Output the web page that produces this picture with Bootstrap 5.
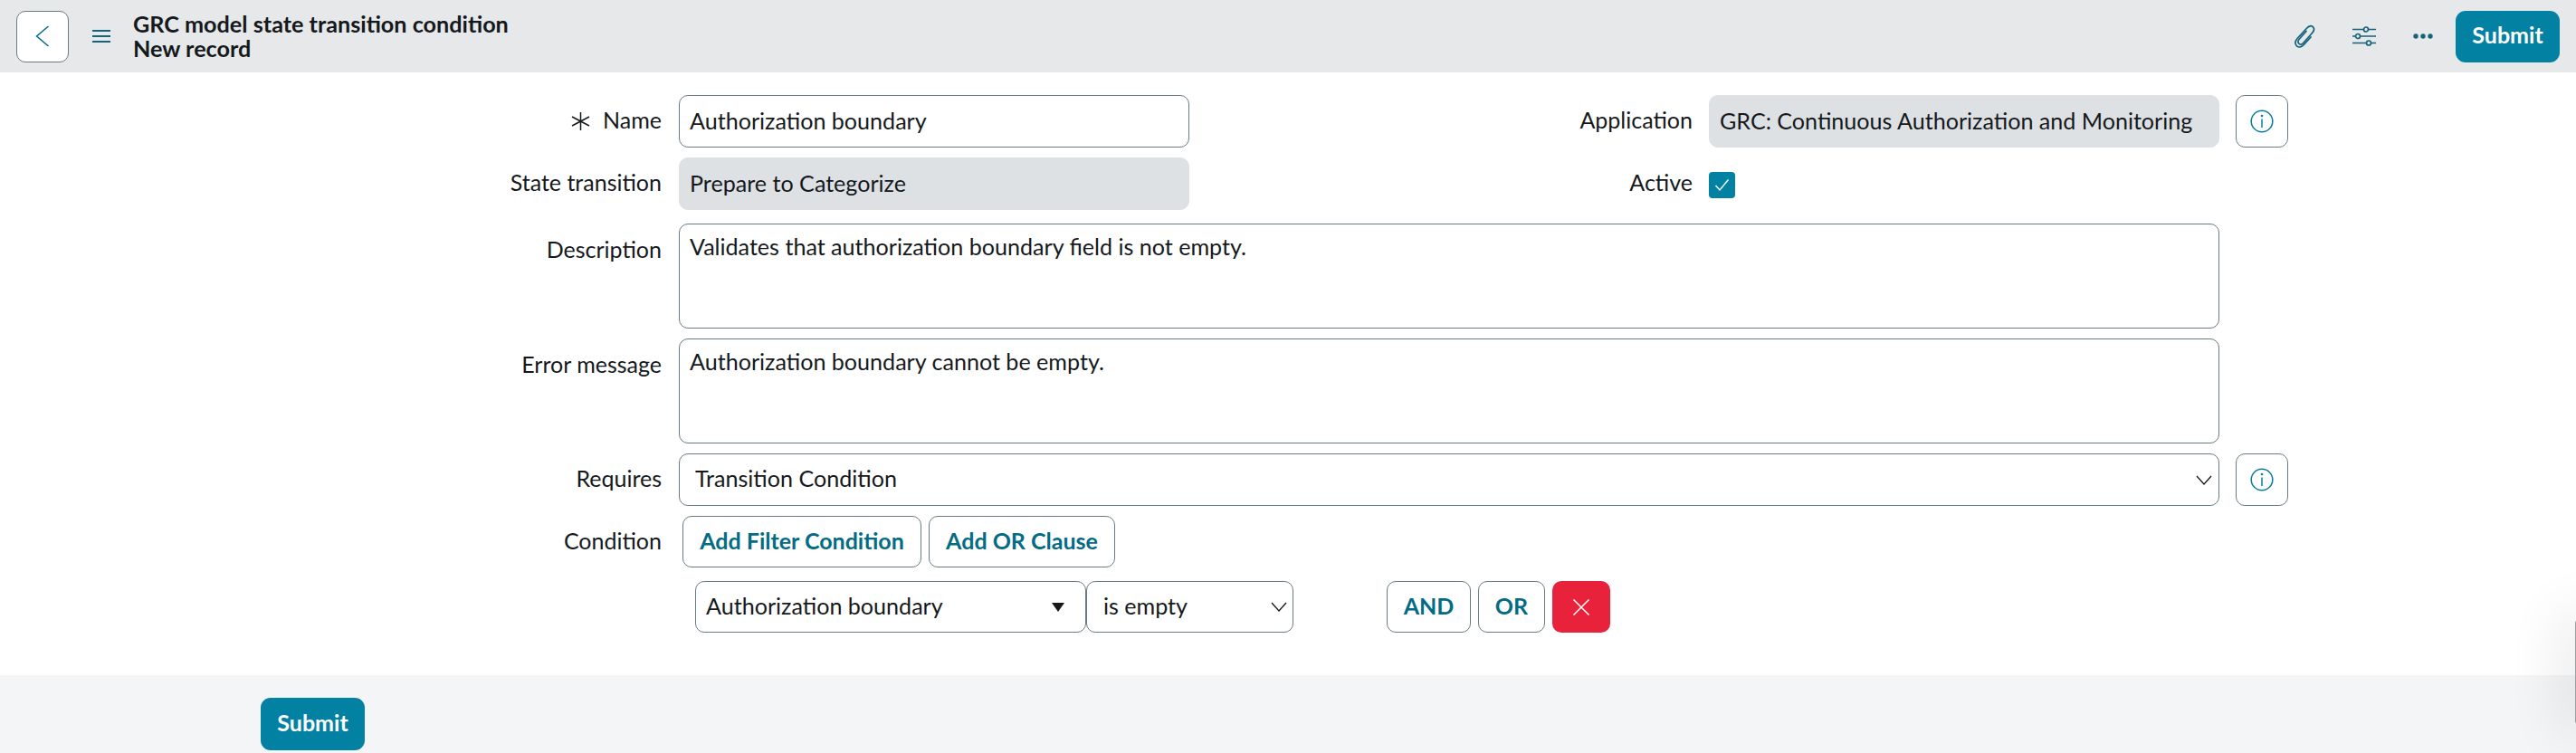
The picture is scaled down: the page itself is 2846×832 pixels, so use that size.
<!DOCTYPE html>
<html lang="en">
<head>
  <meta charset="UTF-8" />
  <meta name="viewport" content="width=device-width, initial-scale=1" />
  <title>GRC model state transition condition - New record</title>
  <link href="https://cdn.jsdelivr.net/npm/bootstrap@5.3.3/dist/css/bootstrap.min.css" rel="stylesheet" />
  <style>
    body { font-family: Lato, "Liberation Sans", sans-serif; font-size: 25px; color: #15191c; background: #fff; height: 832px; overflow: hidden; }
    .rec-header { height: 80px; background: #e6e8ea; padding: 0 18px; }
    .back-btn { width: 58px; height: 57px; background: #fff; border: 1px solid #6b7b84; border-radius: 10px; padding: 0; }
    .menu-btn { width: 20px; margin-left: 26px; margin-right: 25px; }
    .rec-title { font-size: 25.2px; line-height: 27px; font-weight: 700; margin-top: -1px; }
    .head-icon { color: #14627c; }
    .head-gap { margin-left: 41px; }
    .sn-primary { background: #0381a3; color: #fff; border: 0; border-radius: 11px; font-weight: 700; font-size: 25px; width: 115px; height: 57px; padding: 0 0 2px; }
    .sn-primary:hover { background: #0381a3; color: #fff; }
    .head-submit { margin-left: 25px; }
    .rec-form { padding-top: 25px; height: 666px; }
    .form-line { display: flex; align-items: stretch; margin-bottom: 11px; }
    .line-gap { margin-bottom: 15px; }
    .lbl { width: 731px; flex: none; text-align: right; margin-right: 19px; align-self: center; padding-bottom: 2px; }
    .lbl-side { width: 155px; flex: none; text-align: right; margin-right: 18px; margin-left: 401px; align-self: center; padding-bottom: 2px; }
    .lbl-top { align-self: flex-start; padding: 10px 0 0; }
    .req-star { margin-right: 13px; vertical-align: -3px; }
    .fld-half { width: 564px; flex: none; }
    .fld-app { width: 564px; flex: none; }
    .fld-full { width: 1702px; flex: none; }
    .sn-input, .sn-input:focus { height: 58px; font-size: 25.1px; color: #15191c; border: 1px solid #6b7b84; border-radius: 10px; padding: 0 11px 2px; box-shadow: none; }
    .sn-input:disabled, .sn-input[readonly] { background: #dee1e4; border-color: #dee1e4; opacity: 1; }
    textarea.sn-input { height: 116px; padding: 9px 11px; resize: none; line-height: 30px; }
    .sn-select, .sn-select:focus { padding-left: 17px; appearance: none; background-repeat: no-repeat; background-position: right 7px center; background-size: 18px 11px; background-image: url("data:image/svg+xml,%3Csvg xmlns='http://www.w3.org/2000/svg' viewBox='0 0 18 11'%3E%3Cpath d='M1 1l8 9 8-9' fill='none' stroke='%2315191c' stroke-width='1.3'/%3E%3C/svg%3E"); }
    .info-btn { width: 58px; height: 58px; background: #fff; border: 1px solid #6b7b84; border-radius: 10px; padding: 0; margin-left: 18px; flex: none; }
    .check-box { width: 29px; height: 29px; background: #0381a3; border-radius: 4px; margin: 2px 0 0; align-self: center; }
    .sn-outline { height: 57px; background: #fff; border: 1px solid #6b7b84; border-radius: 10px; color: #046b85; font-weight: 700; font-size: 25px; padding: 0 0 2px; }
    .sn-outline:hover { background: #fff; color: #046b85; }
    .cond-btns { margin-left: 4px; gap: 8px; }
    .btn-filter { width: 264px; }
    .btn-clause { width: 206px; }
    .filter-line { padding-left: 768px; margin-top: 15px; height: 57px; }
    .sel-field, .sel-field:focus { width: 432px; height: 57px; padding-left: 11px; background-position: right 23px center; background-size: 14px 10px; background-image: url("data:image/svg+xml,%3Csvg xmlns='http://www.w3.org/2000/svg' viewBox='0 0 14 10'%3E%3Cpath d='M0 0h14L7 10z' fill='%2315191c'/%3E%3C/svg%3E"); }
    .sel-oper, .sel-oper:focus { width: 229px; height: 57px; padding-left: 18px; background-position: right 6px center; }
    .btn-and { width: 93px; margin-left: 103px; }
    .btn-or { width: 74px; margin-left: 8px; }
    .btn-del { width: 64px; height: 57px; margin-left: 8px; background: #e8223b; border: 0; border-radius: 10px; padding: 0; }
    .rec-footer { height: 86px; background: #f4f5f7; padding: 25px 0 0 288px; }
    .rec-footer .sn-primary { height: 58px; }
    /* shadow of the floating panel tucked behind the right edge */
    .edge-panel { position: fixed; right: -6px; top: 685px; width: 7px; height: 115px; background: #9a9d9f; border-radius: 6px; box-shadow: 0 0 60px 12px rgba(0, 0, 0, .12); }
  </style>
</head>
<body>
  <header class="rec-header d-flex align-items-center">
    <button class="back-btn d-flex align-items-center justify-content-center" aria-label="Back">
      <svg width="16" height="24" viewBox="0 0 16 24" fill="none" stroke="#046b85" stroke-width="1.5"><path d="M14.500 1 1.500 12l13 11"/></svg>
    </button>
    <svg class="menu-btn" height="14" viewBox="0 0 20 14" stroke="#14627c" stroke-width="2"><path d="M0 1h20M0 7h20M0 13h20"/></svg>
    <div class="rec-title">
      <div>GRC model state transition condition</div>
      <div>New record</div>
    </div>
    <div class="ms-auto d-flex align-items-center">
      <svg class="head-icon" width="24" height="27" viewBox="0 0 24 27" fill="none" stroke="currentColor" stroke-width="1.700" stroke-linecap="round">
        <path d="M14 7.500 6 16.500c-1.500 1.700-1.300 3.700 0 4.800 1.300 1.100 3.200.9 4.700-.8L20.500 9.500c2.300-2.600 2.500-5.300.7-6.900-1.700-1.500-4.300-1.100-6.500 1.400L4.500 15c-3 3.400-3 6.800-1 8.800 2.200 2 5.300 1.500 8-1.500L19 14"/>
      </svg>
      <svg class="head-icon head-gap" width="26" height="22" viewBox="0 0 26 22" fill="none" stroke="currentColor" stroke-width="1.700">
        <path d="M0 3.500h12.500M17.500 3.500H26M0 11h3.500M8.500 11H26M0 18.500h15.500M20.500 18.500H26"/>
        <circle cx="15" cy="3.500" r="2.500"/><circle cx="6" cy="11" r="2.500"/><circle cx="18" cy="18.500" r="2.500"/>
      </svg>
      <svg class="head-icon head-gap" width="22" height="6" viewBox="0 0 22 6" fill="currentColor">
        <circle cx="3" cy="3" r="2.700"/><circle cx="11" cy="3" r="2.700"/><circle cx="19" cy="3" r="2.700"/>
      </svg>
      <button class="btn sn-primary head-submit">Submit</button>
    </div>
  </header>

  <main class="rec-form">
    <div class="form-line">
      <label class="lbl"><svg class="req-star" width="23" height="22" viewBox="0 0 23 22" stroke="#15191c" stroke-width="1.500" fill="none"><path d="M11.500 1v20M2 6l19 10M2 16 21 6"/></svg>Name</label>
      <div class="fld-half"><input class="form-control sn-input" value="Authorization boundary" /></div>
      <label class="lbl-side">Application</label>
      <div class="fld-app"><input class="form-control sn-input" value="GRC: Continuous Authorization and Monitoring" readonly /></div>
      <button class="info-btn d-flex align-items-center justify-content-center" aria-label="Info">
        <svg width="26" height="26" viewBox="0 0 26 26" fill="none" stroke="#0a7c9b" stroke-width="1.500"><circle cx="13" cy="13" r="11.800"/><path d="M13 10.500V20"/><circle cx="13" cy="7" r=".6" fill="#0a7c9b"/></svg>
      </button>
    </div>
    <div class="form-line line-gap">
      <label class="lbl">State transition</label>
      <div class="fld-half"><input class="form-control sn-input" value="Prepare to Categorize" readonly /></div>
      <label class="lbl-side">Active</label>
      <div class="check-box d-flex align-items-center justify-content-center">
        <svg width="17" height="15" viewBox="0 0 17 15" fill="none" stroke="#fff" stroke-width="1.400"><path d="M1.500 8l4.500 5L15.500 1.500"/></svg>
      </div>
    </div>
    <div class="form-line">
      <label class="lbl lbl-top">Description</label>
      <div class="fld-full"><textarea class="form-control sn-input">Validates that authorization boundary field is not empty.</textarea></div>
    </div>
    <div class="form-line">
      <label class="lbl lbl-top">Error message</label>
      <div class="fld-full"><textarea class="form-control sn-input">Authorization boundary cannot be empty.</textarea></div>
    </div>
    <div class="form-line">
      <label class="lbl">Requires</label>
      <div class="fld-full">
        <select class="form-select sn-input sn-select"><option>Transition Condition</option></select>
      </div>
      <button class="info-btn d-flex align-items-center justify-content-center" aria-label="Info">
        <svg width="26" height="26" viewBox="0 0 26 26" fill="none" stroke="#0a7c9b" stroke-width="1.500"><circle cx="13" cy="13" r="11.800"/><path d="M13 10.500V20"/><circle cx="13" cy="7" r=".6" fill="#0a7c9b"/></svg>
      </button>
    </div>
    <div class="form-line mb-0">
      <label class="lbl">Condition</label>
      <div class="d-flex cond-btns">
        <button class="btn sn-outline btn-filter">Add Filter Condition</button>
        <button class="btn sn-outline btn-clause">Add OR Clause</button>
      </div>
    </div>
    <div class="filter-line d-flex">
      <select class="form-select sn-input sn-select sel-field"><option>Authorization boundary</option></select>
      <select class="form-select sn-input sn-select sel-oper"><option>is empty</option></select>
      <button class="btn sn-outline btn-and">AND</button>
      <button class="btn sn-outline btn-or">OR</button>
      <button class="btn-del d-flex align-items-center justify-content-center" aria-label="Delete">
        <svg width="20" height="20" viewBox="0 0 20 20" stroke="#fff" stroke-width="1.500"><path d="M1.500 1.500l17 17M18.500 1.500l-17 17"/></svg>
      </button>
    </div>
  </main>

  <footer class="rec-footer">
    <button class="btn sn-primary">Submit</button>
  </footer>
  <div class="edge-panel"></div>
</body>
</html>
